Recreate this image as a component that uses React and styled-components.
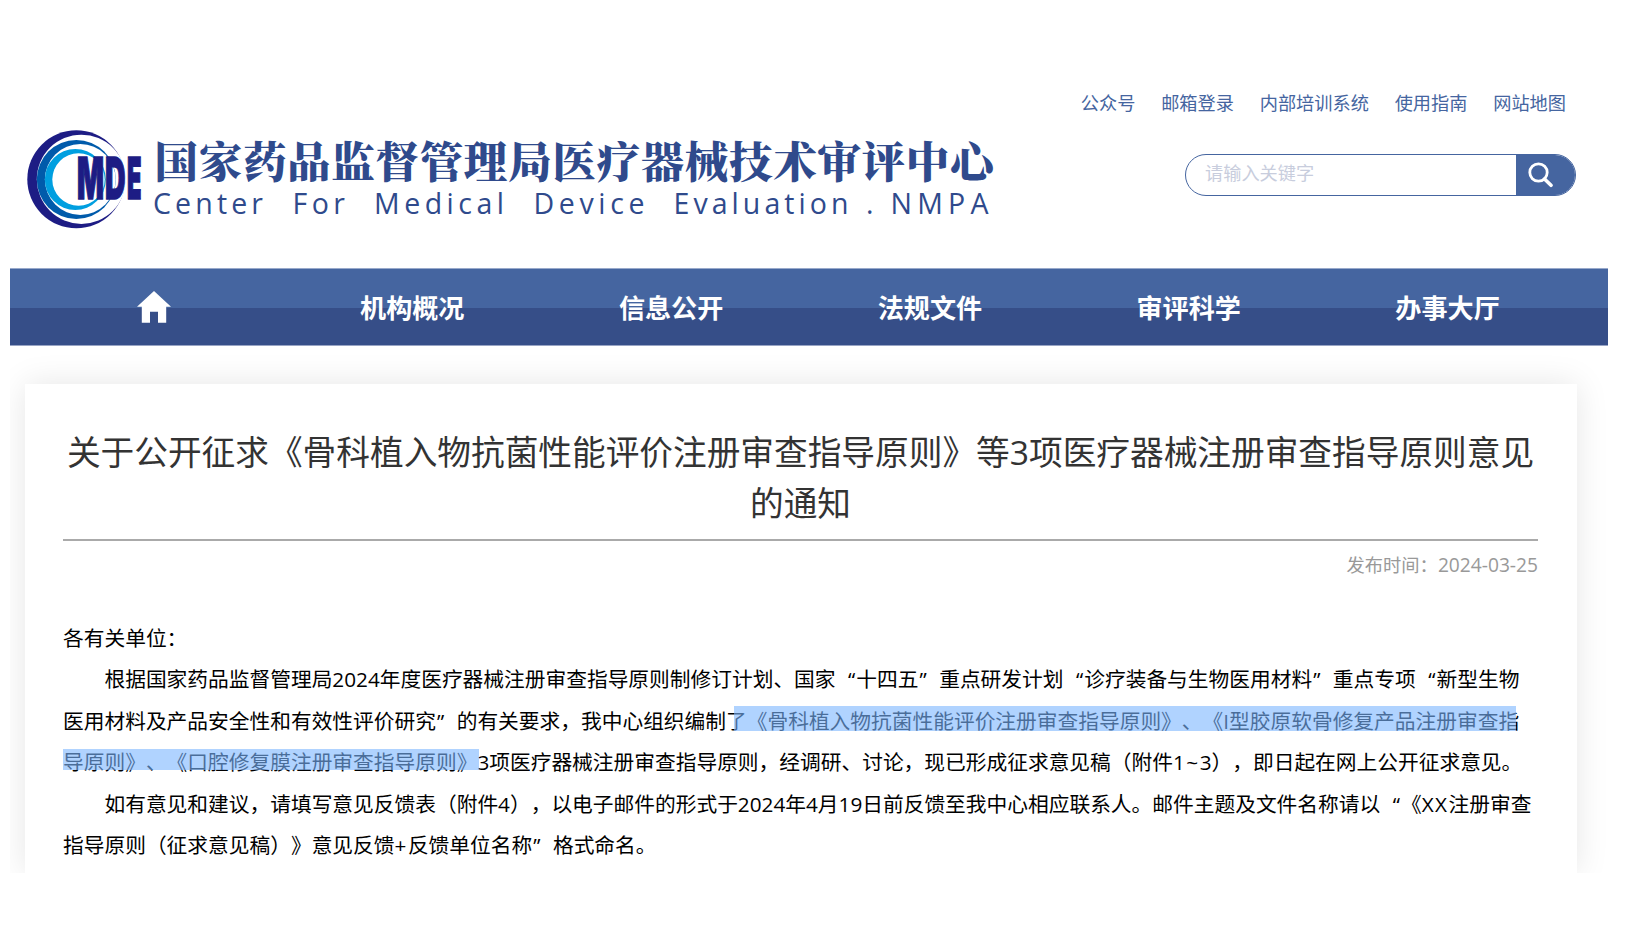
import styled, { createGlobalStyle } from "styled-components";

//
//
//

const GlobalStyle = createGlobalStyle`
  * {
    box-sizing: border-box;
  }

  body {
    margin: 0;
    background: #fff;
    font-family: "Open Sans", "Noto Sans CJK SC", sans-serif;
    text-spacing-trim: space-all;
  }
`;

const Page = styled.div`
  width: 1598px;
  height: 873px;
  margin-left: 10px;

  display: flex;
  flex-direction: column;
  overflow: hidden;
`;

const Header = styled.header`
  height: 268px;
  flex-shrink: 0;
  padding: 90px 32px 0 10px;

  display: flex;
  justify-content: space-between;
`;

const LogoSvg = styled.svg`
  width: 990px;
  height: 115px;
  margin-top: 30px;
`;

const HeaderSide = styled.div`
  display: flex;
  flex-direction: column;
  align-items: flex-end;
`;

const TopLinks = styled.div`
  display: flex;
  gap: 25.8px;
  margin-right: 10px;
`;

const TopLink = styled.a`
  font-size: 18.2px;
  line-height: 27px;
  color: #4565a0;
  cursor: pointer;
`;

const Search = styled.div`
  width: 391px;
  height: 42px;
  margin-top: 37px;

  display: flex;
  border: 1px solid #4565a0;
  border-radius: 21px;
  overflow: hidden;
`;

const SearchInput = styled.input`
  flex: 1;
  min-width: 0;
  padding: 0 19px 4px;
  border: none;
  outline: none;
  background: none;
  font-family: inherit;
  font-size: 18.2px;

  &::placeholder {
    color: #c8cddd;
    opacity: 1;
  }
`;

const SearchButton = styled.button`
  width: 59px;
  padding: 0 0 0 11px;
  border: none;
  background: #4565a0;

  display: flex;
  align-items: center;
`;

const Nav = styled.nav`
  height: 78px;
  flex-shrink: 0;
  padding: 0 31px 0 14px;
  border-top: 1px solid #98a9cb;
  border-bottom: 1px solid #98a4c4;
  background: linear-gradient(#4565a0 39px, #364e88 39px);

  display: flex;
`;

const NavItem = styled.a`
  flex: 1;
  padding-bottom: 1px;

  display: flex;
  align-items: center;
  justify-content: center;

  font-size: 26.1px;
  font-weight: 700;
  color: #fff;
  cursor: pointer;
`;

const Article = styled.main`
  flex: 1;
  margin: 38px 31px 0 15px;
  padding: 43px 39px 0 38px;
  background: #fff;
  box-shadow: 0 0 31px rgba(0, 0, 0, 0.1);
`;

const Title = styled.h1`
  margin: 0;
  padding-bottom: 10px;
  border-bottom: 2px solid #aaa;

  font-size: 33.68px;
  line-height: 51px;
  font-weight: 400;
  text-align: center;
  white-space: nowrap;
  color: #333;
`;

const Published = styled.div`
  padding-top: 8px;
  font-size: 18.3px;
  line-height: 32px;
  text-align: right;
  color: #999;
`;

const PublishedDate = styled.span`
  font-size: 19.2px;
`;

const Content = styled.div`
  margin-top: 37px;
  font-size: 20.73px;
  line-height: 41.44px;
  color: #000;
`;

const Line = styled.div`
  position: relative;
  white-space: nowrap;
  padding-left: ${(props) => (props.$indent ? "2em" : 0)};
`;

const Quote = styled.span`
  display: inline-block;
  width: 1em;
  padding: 0 1px;
  text-align: ${(props) => (props.$open ? "right" : "left")};
`;

const Wide = styled.span`
  letter-spacing: 1.5px;
`;

// translucent marker laid over the text
const Marker = styled.span`
  position: absolute;
  top: ${(props) => props.$top}px;
  left: ${(props) => props.$left}px;
  width: ${(props) => props.$width}px;
  height: ${(props) => props.$height}px;
  background: rgba(123, 181, 255, 0.6);
`;

const Logo = () => {
  return (
    <LogoSvg viewBox="20 120 990 115">
      <circle cx="76.3" cy="179.3" r="49" fill="#1d1c84" />
      <circle cx="81.4" cy="179.3" r="44.6" fill="#fff" />
      <circle cx="76.3" cy="179.5" r="39.5" fill="#005bab" />
      <circle cx="80.3" cy="179.5" r="35.4" fill="#fff" />
      <circle cx="75.3" cy="179.5" r="30.5" fill="#009fe0" />
      <circle cx="78.5" cy="179.5" r="26.2" fill="#fff" />
      <g
        fontFamily="Inter, Liberation Sans"
        fontWeight="900"
        fontSize="57.5"
        fill="#1d1c84"
        stroke="#1d1c84"
        strokeWidth="1.6"
      >
        <text x="77" y="199.2" textLength="27" lengthAdjust="spacingAndGlyphs">
          M
        </text>
        <text x="105" y="199.2" textLength="20.5" lengthAdjust="spacingAndGlyphs">
          D
        </text>
        <text x="127" y="199.2" textLength="14.5" lengthAdjust="spacingAndGlyphs">
          E
        </text>
      </g>
      <text
        x="154.5"
        y="178"
        fontFamily="Noto Serif CJK SC, Noto Sans CJK SC, serif"
        fontWeight="900"
        fontSize="43.5"
        textLength="839"
        fill="#2f4a8c"
      >
        国家药品监督管理局医疗器械技术审评中心
      </text>
      <g fontFamily="Open Sans" fontSize="28.5" fill="#2f4a8c">
        <text x="153" y="213.5" textLength="110">Center</text>
        <text x="292.5" y="213.5" textLength="52.5">For</text>
        <text x="374" y="213.5" textLength="130">Medical</text>
        <text x="533.5" y="213.5" textLength="111">Device</text>
        <text x="673.5" y="213.5" textLength="175">Evaluation</text>
        <text x="866" y="213.5">.</text>
        <text x="890.5" y="213.5" textLength="98">NMPA</text>
      </g>
    </LogoSvg>
  );
};

const SearchIcon = () => {
  return (
    <svg width="26" height="26" viewBox="0 0 26 26" fill="none" stroke="#fff">
      <circle cx="11.5" cy="10.5" r="8.7" strokeWidth="2.8" />
      <path d="M17.5 17l6.5 6.3" strokeWidth="3.6" strokeLinecap="round" />
    </svg>
  );
};

const HomeIcon = () => {
  return (
    <svg width="35" height="32" viewBox="-1 0 35 32" fill="#fff">
      <path d="M17 0L34 15.8H29.2V31.8H21V20.7H13V31.8H4.8V15.8H0Z" />
    </svg>
  );
};

const App = () => {
  return (
    <>
      <GlobalStyle />
      <Page lang="zh-CN">
        <Header>
          <Logo />
          <HeaderSide>
            <TopLinks>
              <TopLink>公众号</TopLink>
              <TopLink>邮箱登录</TopLink>
              <TopLink>内部培训系统</TopLink>
              <TopLink>使用指南</TopLink>
              <TopLink>网站地图</TopLink>
            </TopLinks>
            <Search>
              <SearchInput placeholder="请输入关键字" />
              <SearchButton>
                <SearchIcon />
              </SearchButton>
            </Search>
          </HeaderSide>
        </Header>
        <Nav>
          <NavItem>
            <HomeIcon />
          </NavItem>
          <NavItem>机构概况</NavItem>
          <NavItem>信息公开</NavItem>
          <NavItem>法规文件</NavItem>
          <NavItem>审评科学</NavItem>
          <NavItem>办事大厅</NavItem>
        </Nav>
        <Article>
          <Title>
            关于公开征求《骨科植入物抗菌性能评价注册审查指导原则》等3项医疗器械注册审查指导原则意见
            <br />
            的通知
          </Title>
          <Published>
            发布时间：<PublishedDate>2024-03-25</PublishedDate>
          </Published>
          <Content>
            <Line>各有关单位：</Line>
            <Line $indent>
              根据国家药品监督管理局2024年度医疗器械注册审查指导原则制修订计划、国家
              <Quote $open>“</Quote>十四五<Quote>”</Quote>重点研发计划
              <Quote $open>“</Quote>诊疗装备与生物医用材料<Quote>”</Quote>
              重点专项<Quote $open>“</Quote>新型生物
            </Line>
            <Line>
              医用材料及产品安全性和有效性评价研究<Quote>”</Quote>
              的有关要求，我中心组织编制了《骨科植入物抗菌性能评价注册审查指导原则》、《I型胶原软骨修复产品注册审查指
              <Marker $top={5} $left={671} $width={782} $height={25} />
            </Line>
            <Line>
              导原则》、《口腔修复膜注册审查指导原则》3项医疗器械注册审查指导原则，经调研、讨论，现已形成征求意见稿（附件
              <Wide>1~</Wide>3），即日起在网上公开征求意见。
              <Marker $top={7} $left={0} $width={416} $height={21} />
            </Line>
            <Line $indent>
              如有意见和建议，请填写意见反馈表（附件4），以电子邮件的形式于2024年4月19日前反馈至我中心相应联系人。邮件主题及文件名称请以
              <Quote $open>“</Quote>《<Wide>XX</Wide>注册审查
            </Line>
            <Line>
              指导原则（征求意见稿）》意见反馈<Wide>+</Wide>反馈单位名称
              <Quote>”</Quote>
              格式命名。
            </Line>
          </Content>
        </Article>
      </Page>
    </>
  );
};

export default App;
